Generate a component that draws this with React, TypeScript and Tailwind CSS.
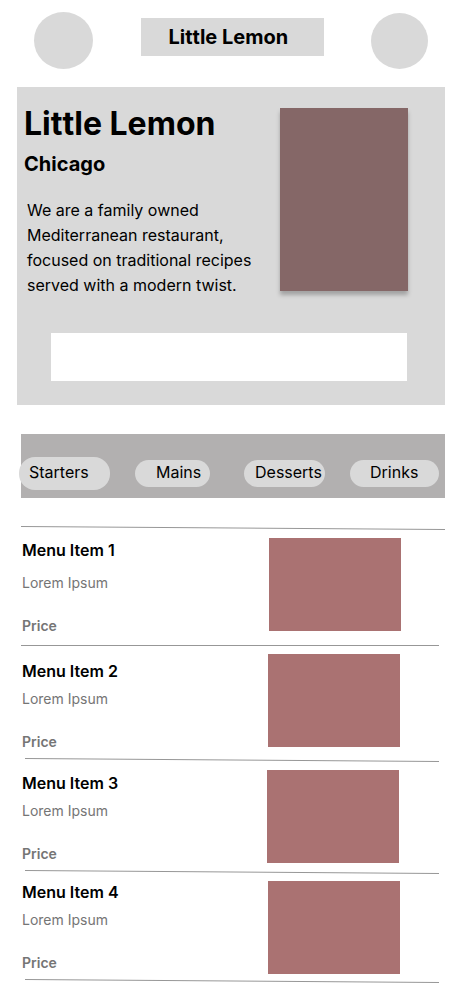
type Dish = {
  name: string;
  row: string;
  gap: string;
  photo: string;
  rule: string;
  slope: number;
};

const dishes: Dish[] = [
  { name: "Menu Item 1", row: "pt-2 pb-[9px]", gap: "mt-[11px]", photo: "mt-0 mr-[44px]", rule: "ml-1 mr-[6px]", slope: 0 },
  { name: "Menu Item 2", row: "pt-[13px] pb-[6px]", gap: "mt-[6px]", photo: "-mt-[5px] mr-[45px]", rule: "ml-2 mr-[6px]", slope: 3 },
  { name: "Menu Item 3", row: "pt-[9px] pb-[6px]", gap: "mt-[6px]", photo: "-mt-px mr-[46px]", rule: "ml-2 mr-[6px]", slope: 3 },
  { name: "Menu Item 4", row: "pt-[6px] pb-[5px]", gap: "mt-[6px]", photo: "mt-px mr-[45px]", rule: "ml-2 mr-[6px]", slope: 3 },
];

/* Hairline between dishes; a slope of 3 lets it fall slightly to the right. */
function Rule({ className, slope }: { className: string; slope: number }) {
  return (
    <div className={className} aria-hidden="true">
      <svg className="block w-full" height={slope + 1}>
        <line x1="0" y1="0.5" x2="100%" y2={slope + 0.5} stroke="#979797" strokeWidth="1" />
      </svg>
    </div>
  );
}

function Header() {
  return (
    <header className="flex items-start justify-between pt-3 pr-[17px] pb-[18px] pl-[17px]">
      <button type="button" aria-label="Menu" className="h-[57px] w-[59px] rounded-[50%] bg-[#d9d9d9]" />
      <div className="mt-[6px] h-[38px] w-[183px] bg-[#d9d9d9] pl-7 text-xl leading-[38px] font-bold [font-kerning:none]">
        Little Lemon
      </div>
      <button type="button" aria-label="Basket" className="mt-px h-[56px] w-[57px] rounded-[50%] bg-[#d9d9d9]" />
    </header>
  );
}

function Hero() {
  return (
    <section className="bg-[#d9d9d9] pt-[17px] pb-6">
      <div className="flex items-start justify-between pr-[37px] pl-[7px]">
        <div>
          <h1 className="text-[32px] leading-10 font-bold [font-kerning:none]">Little Lemon</h1>
          <h2 className="text-xl leading-10 font-bold">Chicago</h2>
          <p className="mt-[14px] pl-[3px] text-base leading-[25px] whitespace-nowrap">
            We are a family owned
            <br />
            Mediterranean restaurant,
            <br />
            focused on traditional recipes
            <br />
            served with a modern twist.
          </p>
        </div>
        <div className="mt-1 h-[183px] w-32 shrink-0 bg-[#856767] shadow-[0_4px_4px_rgba(0,0,0,0.25)]" />
      </div>
      <div className="mt-[35px] mr-[38px] ml-[34px]">
        <input type="search" aria-label="Search the menu" className="block h-12 w-full bg-white px-3 text-base" />
      </div>
    </section>
  );
}

function Categories() {
  return (
    <nav className="mt-[29px] ml-1 flex h-16 items-center justify-between bg-[#b2b0b0] pt-[15px] pr-[6px] text-base leading-6">
      <div className="-ml-[2px] flex items-center gap-[25px]">
        <button type="button" className="h-[33px] w-[91px] rounded-2xl bg-[#d9d9d9] pb-[3px] pl-[10px] text-left">Starters</button>
        <button type="button" className="h-[27px] w-[75px] rounded-2xl bg-[#d9d9d9] pb-[3px] pl-[21px] text-left">Mains</button>
      </div>
      <div className="flex items-center gap-[25px]">
        <button type="button" className="h-[27px] w-[81px] rounded-2xl bg-[#d9d9d9] pb-[3px] pl-[11px] text-left">Desserts</button>
        <button type="button" className="h-[27px] w-[89px] rounded-2xl bg-[#d9d9d9] pb-[3px] pl-5 text-left">Drinks</button>
      </div>
    </nav>
  );
}

export default function App() {
  return (
    <div className="min-h-screen bg-white pr-5 pb-3 pl-[17px] font-['Inter',sans-serif] text-black">
      <Header />
      <main>
        <Hero />
        <Categories />
        <section className="mt-7">
          <Rule className="ml-1" slope={3} />
          {dishes.map((dish) => (
            <div key={dish.name}>
              <article className={`flex items-start justify-between pl-[5px] ${dish.row}`}>
                <div>
                  <h3 className="text-base leading-6 font-semibold">{dish.name}</h3>
                  <p className={`text-sm leading-5 text-[#757575] ${dish.gap}`}>Lorem Ipsum</p>
                  <p className="mt-[23px] text-sm leading-5 font-semibold text-[#757575]">Price</p>
                </div>
                <div className={`h-[93px] w-[132px] shrink-0 bg-[#aa7272] ${dish.photo}`} />
              </article>
              <Rule className={dish.rule} slope={dish.slope} />
            </div>
          ))}
        </section>
      </main>
    </div>
  );
}
